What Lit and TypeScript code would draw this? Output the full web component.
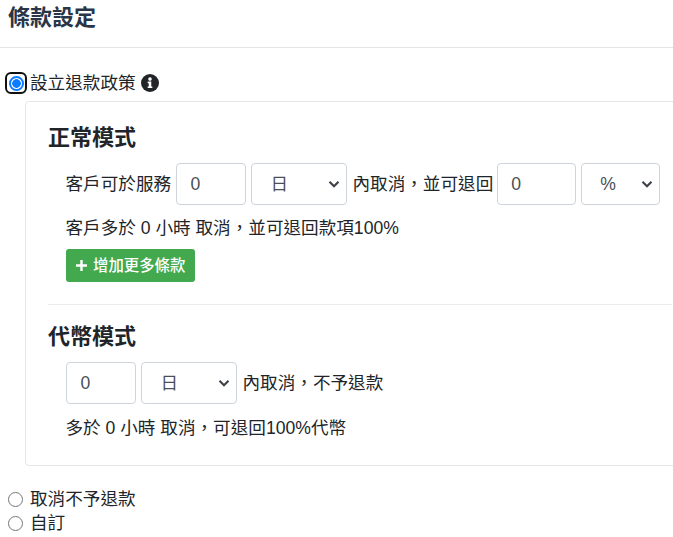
import { LitElement, html, css } from "lit";
import { customElement } from "lit/decorators.js";

@customElement("app-root")
export class AppRoot extends LitElement {
  static styles = css`
    :host {
      display: block;
      width: 673px;
      height: 537px;
      overflow: hidden;
      font-family: "Liberation Sans", "Noto Sans CJK TC", sans-serif;
      font-size: 17.6px;
      line-height: 24px;
      color: #212529;
      background: #fff;
    }
    * { box-sizing: border-box; }
    .head {
      height: 48px;
      padding: 4px 0 0 8px;
      border-bottom: 1px solid #e6e6e6;
      font-size: 22px;
      line-height: 28px;
      font-weight: 700;
      color: #2a3547;
    }
    .body { padding: 23px 0 0 8px; }
    .opt { display: flex; align-items: center; height: 24px; }
    .radio {
      width: 15px;
      height: 15px;
      border-radius: 50%;
      border: 1.5px solid #767676;
      margin-right: 7px;
      flex: none;
    }
    .focus {
      width: 22px;
      height: 22px;
      margin: 0 3px 0 -3px;
      flex: none;
      border: 2px solid #101010;
      border-radius: 6px;
      display: flex;
      align-items: center;
      justify-content: center;
    }
    .ring {
      width: 15px;
      height: 15px;
      border-radius: 50%;
      border: 2px solid #0b7bff;
      background: radial-gradient(circle, #0b7bff 0 4px, #fff 4.6px);
    }
    .info { margin-left: 5px; width: 18px; height: 18px; flex: none; }
    .card {
      margin: 6px -30px 21px 17px;
      border: 1px solid #e6e6e6;
      border-radius: 4px;
      padding: 22px 30px 23px 22px;
      height: 365px;
    }
    h3 {
      margin: 0;
      font-size: 22px;
      line-height: 28px;
      font-weight: 700;
      color: #212529;
    }
    .indent { padding-left: 17.5px; }
    .row { display: flex; align-items: center; height: 42px; }
    .normal-row { margin-top: 11px; }
    .field, .sel {
      height: 42px;
      border: 1px solid #ced4da;
      border-radius: 4px;
      background: #fff;
      color: #495057;
      display: flex;
      align-items: center;
      position: relative;
      flex: none;
    }
    .field { padding-left: 13.5px; }
    .sel { padding-left: 18.5px; margin: 0 5.5px 0 5px; }
    .sel svg { position: absolute; right: 6px; top: 16px; }
    .w70 { width: 70px; }
    .w79 { width: 79px; }
    .w96 { width: 96px; }
    .lead { margin-right: 4.9px; }
    .gap { margin-left: 3.6px; }
    .line { margin-top: 11px; height: 24px; }
    .btn {
      margin: 9px 0 0 0.5px;
      width: 129px;
      height: 33px;
      background: #43a94f;
      color: #fff;
      border-radius: 3px;
      font-size: 15.4px;
      font-weight: 500;
      display: flex;
      align-items: center;
      padding-left: 9px;
      gap: 5px;
    }
    hr {
      margin: 22px 0 18px;
      border: 0;
      border-top: 1px solid #e9ecef;
    }
    .tight { margin-top: 11px; }
    .nudge { margin-left: 0.5px; }
    .line2 { margin-top: 12px; height: 24px; }
  `;

  private chevron() {
    return html`<svg width="12" height="9" viewBox="0 0 12 9"><path d="M1.5 1.8 6 6.3l4.5-4.5" fill="none" stroke="#3f444a" stroke-width="2.2"/></svg>`;
  }

  render() {
    return html`
      <div class="head">條款設定</div>
      <div class="body">
        <div class="opt">
          <span class="focus"><span class="ring"></span></span><span>設立退款政策</span>
          <svg class="info" viewBox="0 0 17 17">
            <circle cx="8.5" cy="8.5" r="8.5" fill="#212529"/>
            <circle cx="8.5" cy="4.8" r="1.7" fill="#fff"/>
            <path d="M6.3 7.2h3.4v4.6h1v1.5H6.3v-1.5h1v-3.1h-1z" fill="#fff"/>
          </svg>
        </div>
        <div class="card">
          <h3>正常模式</h3>
          <div class="indent">
            <div class="row normal-row">
              <span class="lead">客戶可於服務</span>
              <div class="field w70">0</div>
              <div class="sel w96">日${this.chevron()}</div>
              <span>內取消，並可退回</span>
              <div class="field w79 gap">0</div>
              <div class="sel w79">%${this.chevron()}</div>
            </div>
            <div class="line">客戶多於 0 小時 取消，並可退回款項100%</div>
            <div class="btn">
              <svg width="13" height="13" viewBox="0 0 13 13"><path d="M6.5 1v11M1 6.5h11" stroke="#fff" stroke-width="2.4"/></svg>
              <span>增加更多條款</span>
            </div>
          </div>
          <hr />
          <h3>代幣模式</h3>
          <div class="indent">
            <div class="row tight nudge">
              <div class="field w70">0</div>
              <div class="sel w96">日${this.chevron()}</div>
              <span>內取消，不予退款</span>
            </div>
            <div class="line2">多於 0 小時 取消，可退回100%代幣</div>
          </div>
        </div>
        <div class="opt"><span class="radio"></span><span>取消不予退款</span></div>
        <div class="opt"><span class="radio"></span><span>自訂</span></div>
      </div>
    `;
  }
}
